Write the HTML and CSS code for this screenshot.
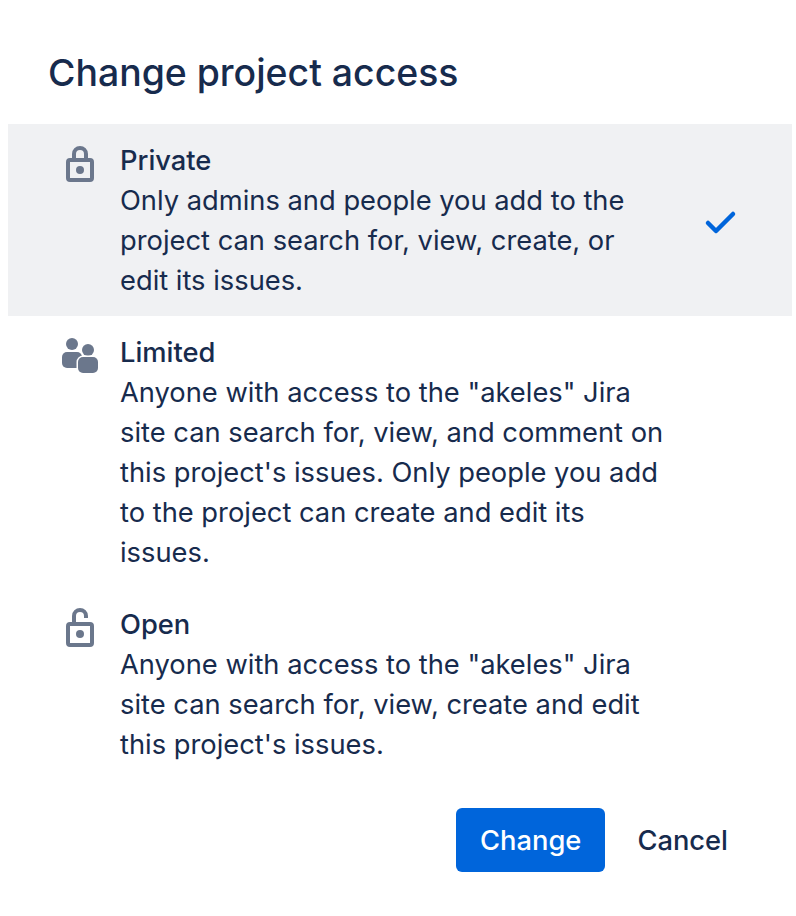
FILE: index.html
```html
<!DOCTYPE html>
<html lang="en">
<head>
<meta charset="utf-8">
<title>Change project access</title>
<link rel="stylesheet" href="styles.css">
</head>
<body>
<main class="dialog">
  <h1 class="title">Change project access</h1>
  <ul class="options">
    <li class="option selected">
      <svg class="icon" viewBox="0 0 48 48"><path class="line" d="M18 18V14a6 6 0 0 1 12 0v4"/><rect class="line" x="12" y="20" width="24" height="20" rx="2"/><circle class="fill" cx="24" cy="30" r="4"/></svg>
      <div class="text">
        <div class="name">Private</div>
        <div>Only admins and people you add to the project can search for, view, create, or edit its issues.</div>
      </div>
      <svg class="check" viewBox="0 0 48 48"><path d="M12 27l8 8L37 18"/></svg>
    </li>
    <li class="option">
      <svg class="icon" viewBox="0 0 48 48"><circle class="fill" cx="16" cy="12" r="6"/><path class="fill" d="M6 25a5 5 0 0 1 5-5h10a5 5 0 0 1 5 5v11H11a5 5 0 0 1-5-5z"/><circle class="fill" cx="32" cy="18" r="6"/><path class="fill halo" d="M22 30a5 5 0 0 1 5-5h10a5 5 0 0 1 5 5v6a5 5 0 0 1-5 5H27a5 5 0 0 1-5-5z"/><path class="fill" d="M22 30a5 5 0 0 1 5-5h10a5 5 0 0 1 5 5v6a5 5 0 0 1-5 5H27a5 5 0 0 1-5-5z"/></svg>
      <div class="text">
        <div class="name">Limited</div>
        <div>Anyone with access to the "akeles" Jira site can search for, view, and comment on this project's issues. Only people you add to the project can create and edit its issues.</div>
      </div>
    </li>
    <li class="option">
      <svg class="icon" viewBox="0 0 48 48"><path class="line" d="M18 18V12a6 6 0 0 1 12 0v2"/><rect class="line" x="12" y="20" width="24" height="21" rx="2"/><circle class="fill" cx="24" cy="30" r="4"/></svg>
      <div class="text">
        <div class="name">Open</div>
        <div>Anyone with access to the "akeles" Jira site can search for, view, create and edit this project's issues.</div>
      </div>
    </li>
  </ul>
  <footer class="actions">
    <button class="btn primary">Change</button>
    <button class="btn">Cancel</button>
  </footer>
</main>
</body>
</html>
```
FILE: styles.css
```css
* { box-sizing: border-box; }
html, body { margin: 0; background: #fff; }
body {
  width: 796px;
  height: 916px;
  overflow: hidden;
  font-family: Inter, "Liberation Sans", sans-serif;
  font-size: 27.3px;
  line-height: 40px;
  color: #172b4d;
}
.dialog { padding: 0 4px 0 8px; }
.title {
  margin: 0;
  height: 124px;
  padding: 49px 0 0 40px;
  font-size: 37.4px;
  line-height: 48px;
  font-weight: 500;
}
.options { list-style: none; margin: 0; padding: 0; }
.option { display: flex; align-items: flex-start; padding: 16px 48px; }
.option.selected { background: #f0f1f3; }
.icon { width: 48px; height: 48px; flex: none; }
.line { fill: none; stroke: #6b778c; stroke-width: 4; }
.fill { fill: #6b778c; }
.halo { stroke: #fff; stroke-width: 3; }
.text { width: 545px; margin: 1px 0 -1px 16px; flex: none; }
.name { font-weight: 500; }
.check { width: 48px; height: 48px; flex: none; align-self: center; margin-left: 31px; }
.check path { fill: none; stroke: #0065db; stroke-width: 4.500; stroke-linecap: round; stroke-linejoin: round; }
.actions { display: flex; justify-content: flex-end; padding: 28px 40px 0 0; gap: 8px; }
.btn {
  height: 64px;
  padding: 2px 24px 0;
  border: 0;
  border-radius: 6px;
  background: transparent;
  font: 500 27.3px/40px Inter, "Liberation Sans", sans-serif;
  color: #172b4d;
}
.primary { background: #0065db; color: #fff; }
```
